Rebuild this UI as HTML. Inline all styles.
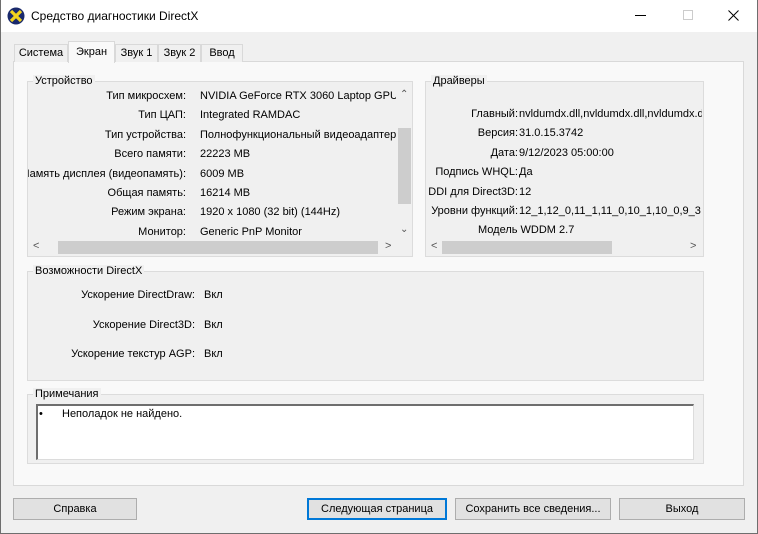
<!DOCTYPE html>
<html><head><meta charset="utf-8"><style>
*{margin:0;padding:0;box-sizing:border-box}
body{width:758px;height:534px;background:#f0f0f0;font-family:"Liberation Sans",sans-serif;font-size:11px;color:#000;position:relative;overflow:hidden}
.a{position:absolute;white-space:nowrap}
.win{position:absolute;left:0;top:0;width:758px;height:534px;border:1px solid #6e6e6e;border-top:0}
.r{text-align:right}
.col{position:absolute;overflow:hidden}
.col div{display:flex;justify-content:flex-end;height:19.4px;line-height:19.4px;white-space:nowrap}
.grp{position:absolute;border:1px solid #dcdcdc;background:#f0f0f0}
.gt{position:absolute;background:#f0f0f0;padding:0 2px;top:-7px;left:6px}
.btn{position:absolute;height:22px;border:1px solid #adadad;background:#e1e1e1;text-align:center;line-height:20px}
.tab{position:absolute;top:44px;height:18px;border:1px solid #d9d9d9;border-bottom:0;background:#f0f0f0;text-align:center;line-height:16px}
.sb{position:absolute;background:#f0f0f0}
</style></head><body>
<div class="a" style="left:0;top:0;width:758px;height:32px;background:#fff"></div>
<svg class="a" style="left:7px;top:7px" width="18" height="18" viewBox="0 0 18 18"><circle cx="9" cy="9" r="8.5" fill="#1a2a6c"/><path d="M4 4L14 14M14 4L4 14" stroke="#f2d21e" stroke-width="3.2"/></svg>
<div class="a" style="left:31px;top:9px;font-size:12px">Средство диагностики DirectX</div>
<div class="a" style="left:635px;top:15px;width:11px;height:1px;background:#000"></div>
<div class="a" style="left:683px;top:10px;width:10px;height:10px;border:1px solid #ccc"></div>
<svg class="a" style="left:728px;top:10px" width="11" height="11"><path d="M0.5 0.5L10.5 10.5M10.5 0.5L0.5 10.5" stroke="#000"/></svg>
<div class="win"></div>
<div class="a" style="left:13px;top:61px;width:731px;height:425px;background:#f9f9f9;border:1px solid #d9d9d9"></div>
<div class="tab" style="left:14px;width:54px">Система</div>
<div class="tab" style="left:68px;top:41px;height:22px;width:47px;background:#f9f9f9;line-height:20px">Экран</div>
<div class="tab" style="left:115px;width:43px">Звук 1</div>
<div class="tab" style="left:158px;width:43px">Звук 2</div>
<div class="tab" style="left:201px;width:42px">Ввод</div>

<div class="grp" style="left:27px;top:81px;width:386px;height:176px"><div class="gt" style="left:5px">Устройство</div></div>
<div class="col" style="left:28px;top:87px;width:158px;height:155px"><div>Тип микросхем:</div><div>Тип ЦАП:</div><div>Тип устройства:</div><div>Всего памяти:</div><div>Память дисплея (видеопамять):</div><div>Общая память:</div><div>Режим экрана:</div><div>Монитор:</div></div>
<div class="a" style="left:200px;top:87px;width:196px;line-height:19.4px;overflow:hidden;height:155px">NVIDIA GeForce RTX 3060 Laptop GPU<br>Integrated RAMDAC<br>Полнофункциональный видеоадаптер<br>22223 MB<br>6009 MB<br>16214 MB<br>1920 x 1080 (32 bit) (144Hz)<br>Generic PnP Monitor</div>
<div class="sb" style="left:397px;top:86px;width:15px;height:154px"></div>
<div class="a" style="left:398px;top:128px;width:13px;height:76px;background:#cdcdcd"></div>
<div class="a" style="left:400px;top:89px;font-size:10px;color:#555">&#8963;</div>
<div class="a" style="left:400px;top:224px;font-size:10px;color:#555">&#8964;</div>
<div class="sb" style="left:28px;top:240px;width:369px;height:16px"></div>
<div class="a" style="left:58px;top:241px;width:320px;height:13px;background:#cdcdcd"></div>
<div class="a" style="left:33px;top:240px;color:#555">&lt;</div>
<div class="a" style="left:385px;top:240px;color:#555">&gt;</div>

<div class="grp" style="left:425px;top:81px;width:279px;height:176px"><div class="gt" style="left:5px">Драйверы</div></div>
<div class="col" style="left:426px;top:105px;width:92px;height:120px"><div>Главный:</div><div>Версия:</div><div>Дата:</div><div>Подпись WHQL:</div><div>DDI для Direct3D:</div><div>Уровни функций:</div></div>
<div class="a" style="left:519px;top:105px;width:183px;line-height:19.4px;overflow:hidden">nvldumdx.dll,nvldumdx.dll,nvldumdx.dll<br>31.0.15.3742<br>9/12/2023 05:00:00<br>Да<br>12<br>12_1,12_0,11_1,11_0,10_1,10_0,9_3</div>
<div class="a" style="left:478px;top:224px">Модель WDDM 2.7</div>
<div class="sb" style="left:426px;top:240px;width:277px;height:16px"></div>
<div class="a" style="left:442px;top:241px;width:170px;height:13px;background:#cdcdcd"></div>
<div class="a" style="left:431px;top:240px;color:#555">&lt;</div>
<div class="a" style="left:690px;top:240px;color:#555">&gt;</div>

<div class="grp" style="left:27px;top:271px;width:677px;height:110px"><div class="gt" style="left:5px">Возможности DirectX</div></div>
<div class="a r" style="left:30px;top:289px;width:165px">Ускорение DirectDraw:</div>
<div class="a r" style="left:30px;top:319px;width:165px">Ускорение Direct3D:</div>
<div class="a r" style="left:30px;top:348px;width:165px">Ускорение текстур AGP:</div>
<div class="a" style="left:204px;top:289px">Вкл</div>
<div class="a" style="left:204px;top:319px">Вкл</div>
<div class="a" style="left:204px;top:348px">Вкл</div>

<div class="grp" style="left:27px;top:394px;width:677px;height:70px"><div class="gt" style="left:5px">Примечания</div></div>
<div class="a" style="left:36px;top:404px;width:658px;height:56px;background:#fff;border:1px solid #dcdcdc;border-top:2px solid #6e6e6e;border-left:2px solid #6e6e6e"></div>
<div class="a" style="left:39px;top:408px">•</div>
<div class="a" style="left:62px;top:408px">Неполадок не найдено.</div>

<div class="btn" style="left:13px;top:498px;width:124px">Справка</div>
<div class="btn" style="left:307px;top:498px;width:140px;border:2px solid #0078d7;line-height:18px">Следующая страница</div>
<div class="btn" style="left:455px;top:498px;width:156px">Сохранить все сведения...</div>
<div class="btn" style="left:619px;top:498px;width:126px">Выход</div>
</body></html>
